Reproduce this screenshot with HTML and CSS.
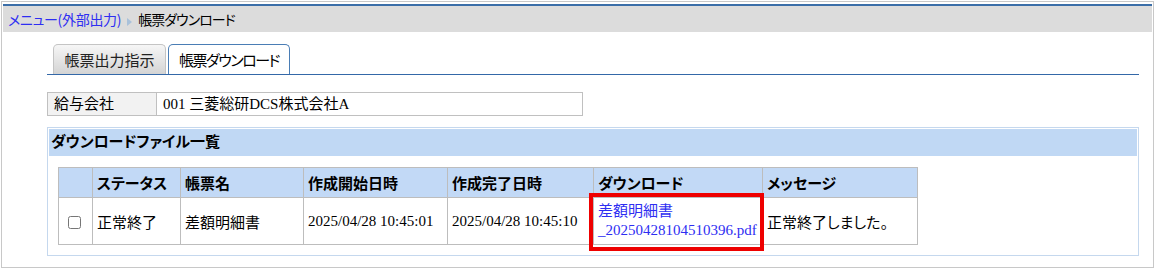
FILE: index.html
```html
<!DOCTYPE html>
<html lang="ja">
<head>
    <meta charset="UTF-8">
    <meta name="viewport" content="width=device-width, initial-scale=1.0">
    <title>帳票ダウンロード</title>
    <link rel="stylesheet" href="styles.css">
</head>
<body>
    <div class="frame">
        <div class="crumbs">
            <a href="#">メニュー(外部出力)</a><span class="arrow"></span><span class="here">帳票ダウンロード</span>
        </div>

        <div class="content">
            <ul class="tabs">
                <li class="tab">帳票出力指示</li>
                <li class="tab active">帳票ダウンロード</li>
            </ul>

            <table class="company">
                <tr>
                    <th>給与会社</th>
                    <td>001 三菱総研DCS株式会社A</td>
                </tr>
            </table>

            <div class="panel">
                <h2>ダウンロードファイル一覧</h2>
                <table class="list">
                    <colgroup>
                        <col style="width:34px">
                        <col style="width:88px">
                        <col style="width:123px">
                        <col style="width:144px">
                        <col style="width:146px">
                        <col style="width:169px">
                        <col style="width:155px">
                    </colgroup>
                    <tr>
                        <th></th>
                        <th>ステータス</th>
                        <th>帳票名</th>
                        <th>作成開始日時</th>
                        <th>作成完了日時</th>
                        <th>ダウンロード</th>
                        <th>メッセージ</th>
                    </tr>
                    <tr>
                        <td class="check"><input type="checkbox" name="sel" id="sel1"></td>
                        <td>正常終了</td>
                        <td>差額明細書</td>
                        <td>2025/04/28 10:45:01</td>
                        <td>2025/04/28 10:45:10</td>
                        <td class="dl">
                            <a href="#">差額明細書<br>_20250428104510396.pdf</a>
                            <span class="mark"></span>
                        </td>
                        <td>正常終了しました。</td>
                    </tr>
                </table>
            </div>
        </div>
    </div>
</body>
</html>
```

FILE: styles.css
```css
body {
    margin: 0;
    font-family: "Liberation Serif", "Noto Sans CJK JP", serif;
    font-size: 15px;
    color: #000;
    font-feature-settings: "palt";
}

.frame {
    margin: 1px 1px 0 1px;
    border: 1px solid #c8c8c8;
    padding: 2px 1px 0;
    height: 263px;
}

/* breadcrumb bar */
.crumbs {
    border-top: 2px solid #3b6ea8;
    background-color: #dcdcdc;
    height: 26px;
    line-height: 26px;
    padding-left: 5px;
    font-family: "Noto Sans CJK JP", sans-serif;
    font-size: 14px;
}
.crumbs a {
    color: #2e2ef2;
    text-decoration: none;
    letter-spacing: -0.3px;
}
.crumbs .here {
    letter-spacing: -1px;
}
.arrow {
    display: inline-block;
    border-left: 5px solid #a9c1da;
    border-top: 4px solid transparent;
    border-bottom: 4px solid transparent;
    margin: 0 6px 0 6px;
    vertical-align: -1px;
}

.content {
    padding: 12px 13px 0 44px;
}

/* tabs */
.tabs {
    display: flex;
    gap: 2px;
    margin: 0;
    padding: 0 0 0 6px;
    list-style: none;
    height: 30px;
    border-bottom: 1px solid #3468a8;
}
.tab {
    width: 111px;
    text-align: center;
    line-height: 29px;
    font-family: "Noto Sans CJK JP", sans-serif;
    font-size: 15px;
    color: #222;
    background: linear-gradient(#f6f6f6, #d4d4d4);
    border: 1px solid #c4c4c4;
    border-bottom: none;
    border-radius: 5px 5px 0 0;
}
.tab.active {
    width: 120px;
    letter-spacing: -1.5px;
    background: #fff;
    border-color: #4a7db5;
    color: #000;
}

/* company row */
.company {
    margin-top: 17px;
    border-collapse: collapse;
    width: 536px;
}
.company th,.company td {
    border: 1px solid #c0c0c0;
    height: 22px;
    line-height: 22px;
    padding: 0 6px;
    text-align: left;
    font-weight: normal;
}
.company th {
    width: 96px;
    background-color: #f2f2f2;
}

/* file list */
.panel {
    margin-top: 11px;
    border: 1px solid #c5d8ee;
    padding: 1px 1px 10px;
}
.panel h2 {
    margin: 0;
    height: 27px;
    line-height: 27px;
    padding-left: 2px;
    background-color: #c0d8f4;
    font-size: 15px;
    font-weight: bold;
}

.list {
    margin: 11px 0 0 9px;
    border-collapse: collapse;
    table-layout: fixed;
    width: 859px;
}
.list th,.list td {
    border: 1px solid #bdbdbd;
    padding: 0 4px;
    text-align: left;
}
.list th {
    height: 29px;
    background-color: #c2d9f6;
    font-weight: bold;
}
.list td {
    height: 46px;
}
.list td.check {
    text-align: center;
    padding: 0;
}
.list td.check input {
    margin: 0 0 0 -2px;
    vertical-align: middle;
}

.dl {
    position: relative;
    line-height: 19px;
}
.dl a {
    color: #2e2ef2;
    text-decoration: none;
}
.mark {
    position: absolute;
    left: -5px;
    top: -5px;
    width: 167px;
    height: 50px;
    border: 4px solid #ee0000;
}
```
